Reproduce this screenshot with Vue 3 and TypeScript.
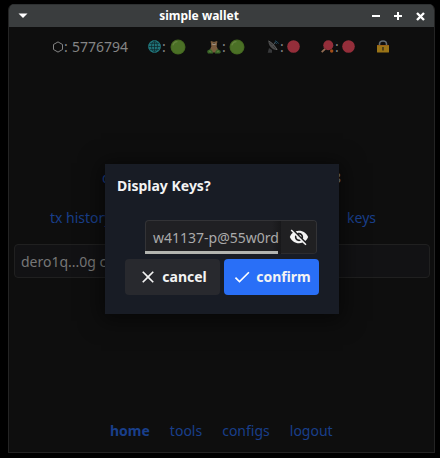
<script setup lang="ts">
interface NavLink {
  label: string
  active?: boolean
}

const height = 5776794
const password = 'w41137-p@55w0rd'
const navLinks: NavLink[] = [
  { label: 'home', active: true },
  { label: 'tools' },
  { label: 'configs' },
  { label: 'logout' },
]
</script>

<template>
  <div class="desktop">
    <div class="window">
      <header class="titlebar">
        <svg class="caret" width="10" height="6" viewBox="0 0 10 6"><path d="M0.5 0.5h9L5 5z" fill="#fff" /></svg>
        <span class="title">simple wallet</span>
        <span class="controls">
          <svg width="8" height="8" viewBox="0 0 8 8"><path d="M0 4h8" stroke="#fff" stroke-width="2" /></svg>
          <svg width="8" height="8" viewBox="0 0 8 8"><path d="M0 4h8M4 0v8" stroke="#fff" stroke-width="2" /></svg>
          <svg width="9" height="9" viewBox="0 0 9 9"><path d="M1 1l7 7M8 1L1 8" stroke="#fff" stroke-width="2.4" /></svg>
        </span>
      </header>

      <main class="content">
        <div class="status">
          <div class="stat height">
            <svg class="hex" width="12" height="12" viewBox="0 0 12 12"><path d="M6 .9l4.5 2.6v5L6 11.1 1.5 8.5v-5z" fill="none" stroke="#858585" stroke-width="1" /></svg>
            <span class="colon">:</span><span>{{ height }}</span>
          </div>
          <div class="stat globe">
            <svg width="13" height="13" viewBox="0 0 13 13">
              <circle cx="6.5" cy="6.5" r="6.2" fill="#1f7379" />
              <path d="M6.5.5v12M.5 6.5h12M1.6 3.3h9.8M1.6 9.7h9.8M6.5.5C2.5 3.5 2.5 9.5 6.5 12.5M6.5.5C10.5 3.5 10.5 9.5 6.5 12.5" fill="none" stroke="#10282b" stroke-width=".75" />
              <circle cx="6.5" cy="6.5" r="5.9" fill="none" stroke="#23757a" stroke-width=".7" />
            </svg>
            <span class="colon">:</span>
            <svg class="dot" width="16" height="16" viewBox="0 0 16 16"><circle cx="8" cy="8" r="7.5" fill="#42651f" /><circle cx="8" cy="8" r="6.6" fill="#4b7026" /><path d="M3 6Q4 3 7 2.7" fill="none" stroke="#64833d" stroke-width="1.2" stroke-linecap="round" /></svg>
          </div>
          <div class="stat bear">
            <svg width="14" height="14" viewBox="0 0 14 14">
              <circle cx="4.6" cy="2" r="1.1" fill="#6d5034" /><circle cx="9.4" cy="2" r="1.1" fill="#6d5034" />
              <path d="M4 1.7h6v3.5L9.5 6 11 9.5v3H3v-3L4.5 6 4 5.2z" fill="#795b3d" />
              <path d="M5.3 3.4h3.4v1.5H5.3z" fill="#a09182" /><path d="M6.3 3.2h1.4v.7H6.3z" fill="#33291f" />
              <path d="M.5 10.5l3-1.5 2 2 .5 2.4H1L.2 12zM8.5 11l2-2 3 1.7.3 1.8-1.3 1H8z" fill="#3b6628" />
              <path d="M2 11l2 1M10 12l2-1" stroke="#5e8442" stroke-width="1" />
            </svg>
            <span class="colon">:</span>
            <svg class="dot" width="16" height="16" viewBox="0 0 16 16"><circle cx="8" cy="8" r="7.5" fill="#42651f" /><circle cx="8" cy="8" r="6.6" fill="#4b7026" /><path d="M3 6Q4 3 7 2.7" fill="none" stroke="#64833d" stroke-width="1.2" stroke-linecap="round" /></svg>
          </div>
          <div class="stat dish">
            <svg width="12" height="13" viewBox="0 0 12 13">
              <path d="M2 8l3 2v2.7H.7z" fill="#37383a" />
              <path d="M1.5 1C1 5.5 5.5 10.5 10 10z" fill="#4b4b4b" />
              <path d="M1.5 1C4 2 9 7 10 10" fill="none" stroke="#777" stroke-width="1" />
              <path d="M5.5 6l3-4" stroke="#55585a" stroke-width="1" />
              <path d="M8 .8q2.4.5 3.5 2.8M7.7 2.3q1.4.3 2 1.6" fill="none" stroke="#204a60" stroke-width="1" />
            </svg>
            <span class="colon">:</span>
            <svg class="dot" width="13" height="13" viewBox="0 0 13 13"><circle cx="6.5" cy="6.5" r="6.3" fill="#942e3a" /></svg>
          </div>
          <div class="stat paddle">
            <svg width="13" height="13" viewBox="0 0 13 13">
              <path d="M.7 12.2L4.5 8.5" stroke="#916c53" stroke-width="1.8" />
              <circle cx="7.3" cy="5.2" r="5" fill="#942e3a" />
              <path d="M2.8 7.3l2.8 2.8" stroke="#6d2a31" stroke-width="1" />
              <circle cx="10.7" cy="11" r="1.7" fill="#a34e18" />
            </svg>
            <span class="colon">:</span>
            <svg class="dot" width="13" height="13" viewBox="0 0 13 13"><circle cx="6.5" cy="6.5" r="6.3" fill="#942e3a" /></svg>
          </div>
          <svg class="lock" width="12" height="13" viewBox="0 0 12 13">
            <path d="M2.5 6V4Q2.5 1 6 1t3.5 3v2" fill="none" stroke="#626c73" stroke-width="1.6" />
            <rect y="5" width="12" height="7.6" rx=".7" fill="#9a7417" />
            <path d="M.3 5.5h11.4" stroke="#9b6015" stroke-width="1" />
            <path d="M6 7v3.5" stroke="#40341b" stroke-width="1.6" />
          </svg>
        </div>

        <div class="balance"><a>d</a><span>8</span></div>
        <div class="links"><a>tx history</a><a>keys</a></div>
        <div class="notice">dero1q...0g c</div>

        <nav class="nav">
          <a v-for="link in navLinks" :key="link.label" :class="{ active: link.active }">{{ link.label }}</a>
        </nav>
      </main>
    </div>

    <section class="dialog">
      <h2>Display Keys?</h2>
      <div class="field">
        <div class="entry"><span>{{ password }}</span></div>
        <div class="reveal">
          <svg width="20" height="20" viewBox="0 0 24 24" fill="#f3f3f3"><path d="M12 7c2.76 0 5 2.24 5 5 0 .65-.13 1.26-.36 1.83l2.92 2.92c1.51-1.26 2.7-2.89 3.43-4.75-1.73-4.39-6-7.5-11-7.5-1.4 0-2.74.25-3.98.7l2.16 2.16C10.74 7.13 11.35 7 12 7zM2 4.27l2.28 2.28.46.46C3.08 8.3 1.78 10.02 1 12c1.73 4.39 6 7.5 11 7.5 1.55 0 3.03-.3 4.38-.84l.42.42L19.73 22 21 20.73 3.27 3 2 4.27zM7.53 9.8l1.55 1.55c-.05.21-.08.43-.08.65 0 1.66 1.34 3 3 3 .22 0 .44-.03.65-.08l1.55 1.55c-.67.33-1.41.53-2.2.53-2.76 0-5-2.24-5-5 0-.79.2-1.53.53-2.2zm4.31-.78l3.15 3.15.02-.16c0-1.66-1.34-3-3-3l-.17.01z" /></svg>
        </div>
      </div>
      <div class="actions">
        <button type="button" class="cancel">
          <svg width="20" height="20" viewBox="0 0 24 24" fill="#f3f3f3"><path d="M19 6.41L17.59 5 12 10.59 6.41 5 5 6.41 10.59 12 5 17.59 6.41 19 12 13.41 17.59 19 19 17.59 13.41 12z" /></svg>cancel
        </button>
        <button type="button" class="confirm">
          <svg width="20" height="20" viewBox="0 0 24 24" fill="#fff"><path d="M9 16.17L4.83 12l-1.42 1.41L9 19 21 7l-1.41-1.41z" /></svg>confirm
        </button>
      </div>
    </section>
  </div>
</template>

<style>
body {
  background: #000;
  overflow: hidden;
}
</style>

<style scoped>
* {
  box-sizing: border-box;
}
.desktop {
  position: relative;
  width: 440px;
  height: 458px;
  padding: 4px 5px 5px 8px;
  background: #000;
  font: 14px/20px "Noto Sans", sans-serif;
  color: #858585;
}
svg {
  display: block;
  flex: none;
}
.window {
  display: flex;
  flex-direction: column;
  width: 427px;
  height: 449px;
  border: 1px solid #242424;
  border-top: 0;
  border-radius: 6px 6px 0 0;
  overflow: hidden;
  background: #0e0e0e;
}
.titlebar {
  display: grid;
  grid-template-columns: 60px 1fr 60px;
  align-items: center;
  height: 23px;
  flex: none;
  background: #3a3d3e;
  border-top: 1px solid #2d3031;
}
.caret {
  margin-left: 9px;
}
.title {
  padding-right: 45px;
  text-align: center;
  font-size: 12px;
  font-weight: 700;
  color: #fff;
  white-space: nowrap;
}
.controls {
  display: flex;
  align-items: center;
  justify-content: flex-end;
  gap: 14px;
  margin-right: 9px;
}
.content {
  display: flex;
  flex-direction: column;
  flex: 1;
}
.status {
  display: flex;
  align-items: center;
  height: 20px;
  margin: 10px 0 0 43px;
}
.stat {
  display: flex;
  align-items: center;
}
.status svg {
  margin-bottom: 1px;
}
.status .hex {
  margin-bottom: 0;
}
.colon {
  width: 8px;
  padding-left: 1px;
}
.height { width: 96px; }
.height .colon { padding-left: 0; }
.globe { width: 59px; }
.bear { width: 60px; }
.dish { width: 54px; }
.paddle { width: 56px; }
.globe .colon { width: 9px; }
.balance {
  display: flex;
  justify-content: space-between;
  width: 239px;
  margin: 111px 0 0 93px;
}
a {
  color: #193f8b;
}
.links {
  display: flex;
  justify-content: space-between;
  margin: 20px 58px 0 41px;
}
.notice {
  height: 34px;
  margin: 16px 4px 0 5px;
  padding: 7px 6px;
  border: 1px solid #202020;
  border-radius: 4px;
  background: #121214;
  color: #777;
}
.nav {
  display: flex;
  gap: 20px;
  margin: auto 0 11px 101px;
}
.nav .active {
  font-weight: 700;
}
.dialog {
  position: absolute;
  left: 105px;
  top: 164px;
  width: 234px;
  height: 150px;
  padding: 12px 20px 0;
  background: #181c25;
  box-shadow: 0 3px 20px 4px rgba(0, 0, 0, .5);
}
h2 {
  margin: 0 0 24px -8px;
  font-size: 14px;
  line-height: 20px;
  font-weight: 700;
  color: #f3f3f3;
}
.field {
  display: flex;
  width: 172px;
  height: 34px;
  margin-left: 20px;
  border: 1px solid #333336;
  border-bottom-color: #2c2c2f;
  border-radius: 4px;
  background: #202023;
  color: #aaa;
}
.entry {
  width: 136px;
  height: 33px;
  margin-left: -1px;
  padding: 7px 0 0 8px;
  white-space: nowrap;
  background: linear-gradient(#b2b4b0, #b2b4b0) left bottom / 133px 3px no-repeat, linear-gradient(90deg, transparent 127px, #18181a);
}
.reveal {
  display: grid;
  place-items: center;
  flex: 1;
  border-radius: 0 3px 3px 0;
  background: #202022;
}
.actions {
  display: flex;
  gap: 4px;
  width: 194px;
  margin-top: 5px;
}
button {
  display: flex;
  align-items: center;
  justify-content: center;
  gap: 4px;
  width: 95px;
  height: 36px;
  padding: 0;
  border: 0;
  border-radius: 4px;
  font: 700 14px/20px "Noto Sans", sans-serif;
  color: #f3f3f3;
}
.cancel {
  background: #28292e;
}
.confirm {
  background: #296ff7;
}
</style>
